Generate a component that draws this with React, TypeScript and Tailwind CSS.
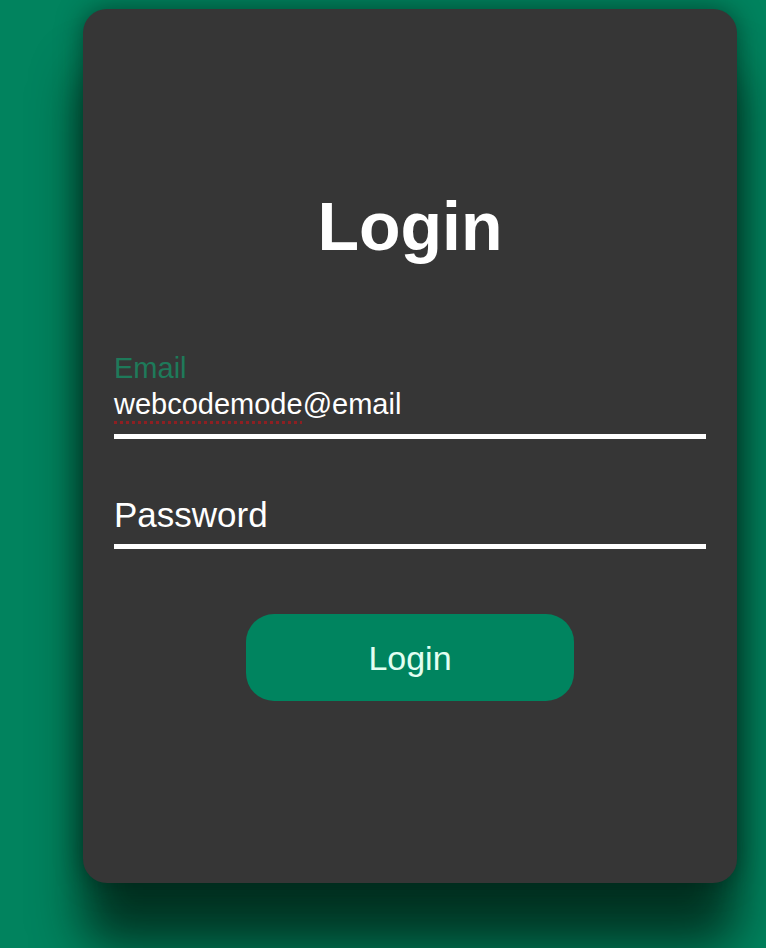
import React from 'react';

const App: React.FC = () => {
  return (
    <div
      className="min-h-screen w-full overflow-hidden bg-[#01835e] pt-[9px] pl-[83px]"
      style={{ fontFamily: '"Liberation Sans", Arial, sans-serif' }}
    >
      {/* 카드 */}
      <div className="flex h-[874px] w-[654px] flex-col rounded-[24px] bg-[#363636] px-[31px] pt-[183px] shadow-[0_0_26px_rgba(0,30,20,0.6),0_62px_50px_rgba(0,18,10,0.7)]">
        <h1 className="text-center text-[68px] font-bold leading-none text-white">Login</h1>

        {/* 이메일 */}
        <div className="mt-[94px] flex flex-col border-b-[5px] border-white pb-[15px]">
          <label className="text-[29px] leading-none text-[#1e7a5a]">Email</label>
          <div className="mt-[7px] text-[29px] leading-none text-white">
            <span className="underline decoration-[#8e1f22] decoration-dotted decoration-[3px] underline-offset-[7px]">
              webcodemode
            </span>
            @email
          </div>
        </div>

        {/* 비밀번호 */}
        <div className="mt-[58px] flex flex-col border-b-[5px] border-white pb-[12px]">
          <span className="text-[35px] leading-none text-white">Password</span>
        </div>

        <div className="mt-[65px] flex justify-center">
          <button className="h-[87px] w-[328px] rounded-[28px] bg-[#00845f] text-[34px] leading-none text-[#e2fff2]">
            Login
          </button>
        </div>
      </div>
    </div>
  );
};

export default App;
